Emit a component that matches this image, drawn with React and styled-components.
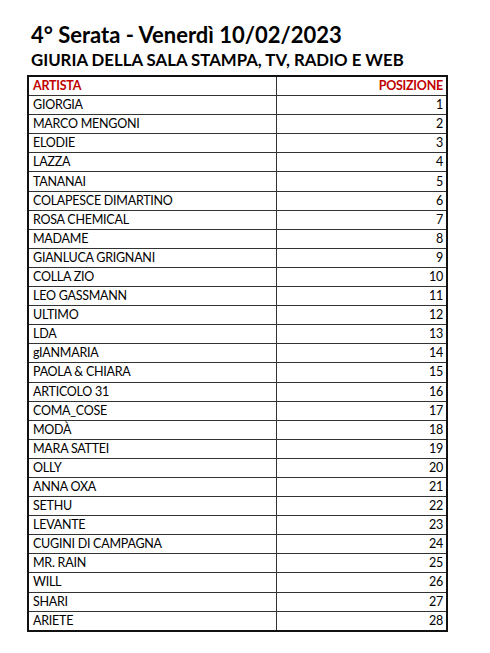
import React from 'react';
import styled, { createGlobalStyle } from 'styled-components';

const GlobalStyle = createGlobalStyle`
  body {
    margin: 0;
    background: #fff;
    font-family: Lato, "Open Sans", sans-serif;
    color: #000;
  }
`;

const Page = styled.div`
  width: 490px;
  height: 653px;
  padding: 22px 0 0 27px;
  box-sizing: border-box;
  display: flex;
  flex-direction: column;
`;

const Title = styled.h1`
  margin: 0 0 0 4px;
  font-size: 22px;
  font-weight: 700;
  line-height: 26px;
  height: 26px;
`;

const Subtitle = styled.h2`
  margin: 1px 0 5px 4px;
  font-size: 16.8px;
  font-weight: 700;
  line-height: 21px;
  height: 21px;
`;

const Table = styled.table`
  width: 419px;
  border-collapse: collapse;
  border: 2px solid #111;
  table-layout: fixed;
`;

const Cell = styled.td`
  height: 18.1px;
  padding: 0 3px 0 4px;
  border: 1px solid #333;
  font-size: 12.5px;
  letter-spacing: -0.25px;
  line-height: 18px;
  text-align: ${(p) => (p.$right ? 'right' : 'left')};
  color: ${(p) => (p.$head ? '#c00000' : '#000')};
  font-weight: ${(p) => (p.$head ? 700 : 400)};
  white-space: nowrap;
`;

const artists = [
  'GIORGIA',
  'MARCO MENGONI',
  'ELODIE',
  'LAZZA',
  'TANANAI',
  'COLAPESCE DIMARTINO',
  'ROSA CHEMICAL',
  'MADAME',
  'GIANLUCA GRIGNANI',
  'COLLA ZIO',
  'LEO GASSMANN',
  'ULTIMO',
  'LDA',
  'gIANMARIA',
  'PAOLA & CHIARA',
  'ARTICOLO 31',
  'COMA_COSE',
  'MODÀ',
  'MARA SATTEI',
  'OLLY',
  'ANNA OXA',
  'SETHU',
  'LEVANTE',
  'CUGINI DI CAMPAGNA',
  'MR. RAIN',
  'WILL',
  'SHARI',
  'ARIETE',
];

const App = () => (
  <Page>
    <GlobalStyle />
    <Title>4° Serata - Venerdì 10/02/2023</Title>
    <Subtitle>GIURIA DELLA SALA STAMPA, TV, RADIO E WEB</Subtitle>
    <Table>
      <colgroup>
        <col style={{ width: 248 }} />
        <col style={{ width: 171 }} />
      </colgroup>
      <tbody>
        <tr>
          <Cell $head>ARTISTA</Cell>
          <Cell $head $right>POSIZIONE</Cell>
        </tr>
        {artists.map((name, i) => (
          <tr key={name}>
            <Cell>{name}</Cell>
            <Cell $right>{i + 1}</Cell>
          </tr>
        ))}
      </tbody>
    </Table>
  </Page>
);

export default App;
